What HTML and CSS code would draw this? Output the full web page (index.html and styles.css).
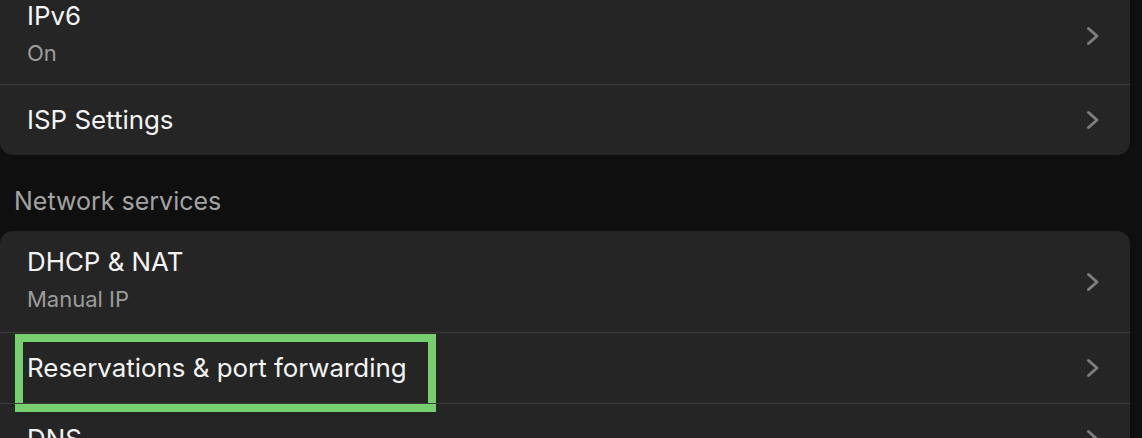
FILE: index.html
```html
<!DOCTYPE html>
<html>
<head>
<meta charset="utf-8">
<link rel="stylesheet" href="styles.css">
</head>
<body>
<div class="page">
  <div class="card card-first">
    <div class="row row-tall">
      <div class="text">
        <div class="title">IPv6</div>
        <div class="sub">On</div>
      </div>
      <svg class="chev" viewBox="0 0 14 20"><path d="M2.5 2.5 L11 10 L2.5 17.5"/></svg>
    </div>
    <div class="row">
      <div class="text"><div class="title">ISP Settings</div></div>
      <svg class="chev" viewBox="0 0 14 20"><path d="M2.5 2.5 L11 10 L2.5 17.5"/></svg>
    </div>
  </div>

  <div class="section">Network services</div>

  <div class="card">
    <div class="row row-tall">
      <div class="text">
        <div class="title">DHCP &amp; NAT</div>
        <div class="sub">Manual IP</div>
      </div>
      <svg class="chev" viewBox="0 0 14 20"><path d="M2.5 2.5 L11 10 L2.5 17.5"/></svg>
    </div>
    <div class="row row-marked">
      <div class="text"><div class="title">Reservations &amp; port forwarding</div></div>
      <svg class="chev" viewBox="0 0 14 20"><path d="M2.5 2.5 L11 10 L2.5 17.5"/></svg>
      <div class="highlight"></div>
    </div>
    <div class="row">
      <div class="text"><div class="title">DNS</div></div>
      <svg class="chev" viewBox="0 0 14 20"><path d="M2.5 2.5 L11 10 L2.5 17.5"/></svg>
    </div>
  </div>
</div>
</body>
</html>
```

FILE: styles.css
```css
html, body {
  margin: 0;
  padding: 0;
  background: #0f0f0f;
  height: 100%;
  overflow: hidden;
}

.page {
  padding: 0 12px 0 0;
  font-family: "Inter", "Noto Sans", sans-serif;
  color: #f2f2f2;
}

.card {
  background: #252525;
  border-radius: 13px;
  overflow: hidden;
}

.card-first {
  margin-top: -13px;
}

.row {
  position: relative;
  display: flex;
  align-items: center;
  min-height: 71px;
  padding: 0 30px 0 27px;
  box-sizing: border-box;
}

.row + .row {
  border-top: 1px solid #3b3b3b;
}

.row-tall {
  min-height: 101px;
}

.card-first .row-tall {
  min-height: 97px;
}

.row-tall .text {
  padding-bottom: 5px;
}

.text {
  flex: 1;
  display: flex;
  flex-direction: column;
  gap: 9px;
}

.title {
  font-size: 25.9px;
  line-height: 30px;
  color: #f4f4f4;
}

.sub {
  font-size: 22px;
  line-height: 26px;
  color: #9c9c9c;
}

.chev {
  width: 14px;
  height: 20px;
  flex: none;
}

.chev path {
  fill: none;
  stroke: #7e7e7e;
  stroke-width: 3;
  stroke-linecap: round;
  stroke-linejoin: round;
}

.section {
  height: 76px;
  box-sizing: border-box;
  padding: 31px 0 0 14px;
  font-size: 25px;
  line-height: 30px;
  color: #a3a3a3;
}

.highlight {
  position: absolute;
  left: 15px;
  top: 1px;
  width: 421px;
  height: 78px;
  box-sizing: border-box;
  border: 8px solid #76d06f;
}
```
